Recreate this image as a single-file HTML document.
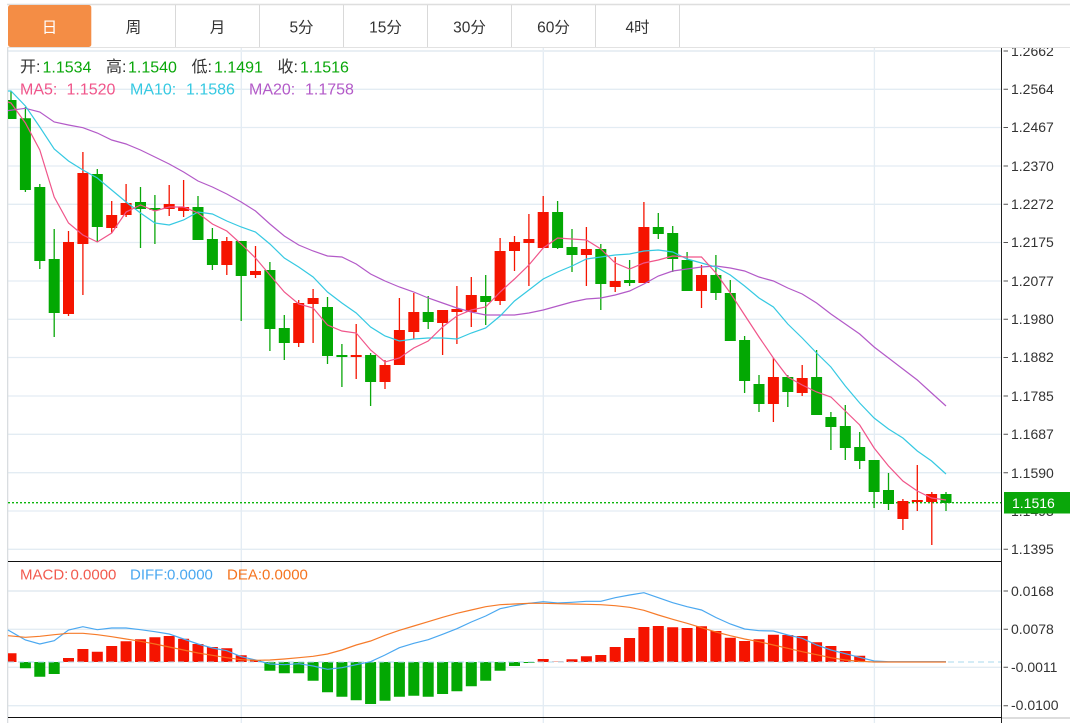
<!DOCTYPE html>
<html lang="zh"><head><meta charset="utf-8"><title>K</title>
<style>
html,body{margin:0;padding:0;background:#fff;width:1070px;height:723px;overflow:hidden}
svg{display:block;position:absolute;left:0;top:0}
text{font-family:"Liberation Sans","Noto Sans CJK SC",sans-serif}
.a{font-size:14px;fill:#333}
.t{font-size:15.5px;fill:#333;text-anchor:middle;font-family:"Liberation Sans","Noto Sans CJK SC",sans-serif}
.k{font-size:16px;fill:#333}
.g{font-size:16px;fill:#0aa70a}
</style></head><body>
<svg width="1070" height="723" viewBox="0 0 1070 723" xmlns="http://www.w3.org/2000/svg">
<rect width="1070" height="723" fill="#fff"/>
<!-- grid -->
<g stroke="#e3ecf3" stroke-width="1.3" fill="none">
<path d="M8 89.3H1001M8 127.5H1001M8 166H1001M8 204.3H1001M8 242.5H1001M8 281H1001M8 319.3H1001M8 357.5H1001M8 396H1001M8 434.3H1001M8 472.7H1001M8 511H1001M8 549.3H1001"/>
<path d="M8 629.3H1001M8 667.3H1001M8 705.7H1001"/>
<path d="M241.3 48V723M543.3 48V723M874.4 48V723"/>
<path d="M8 51H1001M8 591H1001" stroke="#e9eff4" stroke-width="2"/>
</g>
<rect x="7" y="48" width="1.3" height="675" fill="#d9dde0"/>
<!-- dotted last price -->
<path d="M8 502.7H1002" stroke="#0bb50b" stroke-width="1.4" stroke-dasharray="2 2" fill="none"/>
<!-- wicks green -->
<path fill="none" stroke="#0aa70a" stroke-width="1.3" d="M11 91V100M25.4 107V192M39.8 184V269M54.2 229V337M97.3 169V242M140.5 187V248M154.9 195V244M198 196V240M212.4 228V270M241.2 241V321M269.9 262V351M284.3 315V360M327.5 297V364M341.9 344V387M370.6 353V406M428.2 296V329M485.7 275V325M557.6 201V249M572 229V272M600.8 244V310M629.6 260V286M658.3 213V239M672.7 226V272M687.1 252V291M715.9 255V300M730.3 280V341M744.6 336V393M759 375V412M787.8 375V407M816.6 350V415M830.9 412V450M845.3 405V460M859.7 432V469M874.1 460V508M888.5 473V510M946 492V511"/>
<!-- wicks red -->
<path fill="none" stroke="#f51400" stroke-width="1.3" d="M68.5 231V316M82.9 152V295M111.7 201V233M126.1 184V217M169.2 185V216M183.6 180V217M226.8 237V275M255.5 246V278M298.7 300V347M313.1 289V343M356.2 324V379M385 360V389M399.4 298V365M413.8 293V339M442.6 310V355M456.9 286V344M471.3 277V327M500.1 238V305M514.5 236V271M528.9 214V286M543.2 196V248M586.4 227V286M615.2 257V292M643.9 202V283M701.5 265V308M773.4 358V422M802.2 365V396M902.9 499V530M917.3 465V511M931.8 492V545"/>
<!-- bodies green -->
<path fill="#03a803" d="M8 100h8.5V119H8zM19.9 118.3h11V190h-11zM34.3 187h11V261h-11zM48.7 259h11V313h-11zM91.8 174h11V227h-11zM135 202h11V209h-11zM149.4 208h11V210h-11zM192.5 207h11V240h-11zM206.9 239h11V265h-11zM235.7 241h11V276h-11zM264.4 270h11V329h-11zM278.8 328h11V343h-11zM322 307h11V356h-11zM336.4 355h11V357h-11zM365.1 355h11V382h-11zM422.7 312h11V322h-11zM480.2 296h11V302h-11zM552.1 212h11V248h-11zM566.5 247h11V255h-11zM595.3 249h11V284h-11zM624.1 280h11V283h-11zM652.8 227h11V234h-11zM667.2 233h11V259h-11zM681.6 260h11V291h-11zM710.4 275h11V293h-11zM724.8 293h11V341h-11zM739.1 340h11V381h-11zM753.5 384h11V404h-11zM782.3 377h11V392h-11zM811.1 377h11V415h-11zM825.4 417h11V427h-11zM839.8 426h11V448h-11zM854.2 447h11V461h-11zM868.6 460h11V492h-11zM883 490h11V504h-11zM940.5 494h11V503h-11z"/>
<!-- bodies red -->
<path fill="#f51400" d="M63 242h11V314h-11zM77.4 173h11V244h-11zM106.2 215h11V228h-11zM120.6 203h11V215h-11zM163.7 204h11V209h-11zM178.1 207h11V211h-11zM221.3 241h11V265h-11zM250 271h11V275h-11zM293.2 303h11V343h-11zM307.6 298h11V304h-11zM350.7 355h11V357h-11zM379.5 365h11V382h-11zM393.9 330h11V365h-11zM408.3 312h11V332h-11zM437.1 310h11V323h-11zM451.4 309h11V312h-11zM465.8 295h11V312h-11zM494.6 251h11V301h-11zM509 242h11V251h-11zM523.4 239h11V243h-11zM537.7 212h11V248h-11zM580.9 249h11V255h-11zM609.7 281h11V287h-11zM638.4 227h11V283h-11zM696 275h11V291h-11zM767.9 377h11V404h-11zM796.7 378h11V393h-11zM897.4 501h11V519h-11zM911.8 500h11V502h-11zM926.1 494h11V502h-11z"/>
<!-- MA20 -->
<polyline fill="none" stroke="#b35ac8" stroke-width="1.2" points="8,110.6 25.4,108.3 39.8,112 54.2,122 68.5,125 82.9,127.7 97.3,133 111.7,140 126.1,144 140.5,150 154.9,157 169.2,164 183.6,172 198,181 212.4,187 226.8,194 241.2,202 255.5,211 269.9,224 284.3,236 298.7,245 313.1,251 327.5,256 341.9,257 356.2,264 370.6,274 385,281 399.4,287 413.8,292 428.2,298 442.6,303 456.9,308 471.3,312 485.7,315 500.1,315 514.5,315 528.9,313 543.2,310 557.6,306 572,302 586.4,299 600.8,298 615.2,295 629.6,291 643.9,284 658.3,276 672.7,271 687.1,269 701.5,267 715.9,266 730.3,268 744.6,271 759,277 773.4,281 787.8,288 802.2,294 816.6,303 830.9,314 845.3,324 859.7,334 874.1,347 888.5,358 902.9,369 917.3,380 931.6,393 946,406"/>
<!-- MA10 -->
<polyline fill="none" stroke="#36c9e2" stroke-width="1.2" points="8,91 11,91 25.4,106 39.8,127 54.2,149 68.5,161 82.9,170 97.3,178 111.7,190 126.1,202 140.5,213 154.9,223 169.2,225 183.6,220 198,212 212.4,214 226.8,221 241.2,227 255.5,232 269.9,244 284.3,258 298.7,267 313.1,277 327.5,292 341.9,303 356.2,313 370.6,327 385,336 399.4,341 413.8,339 428.2,338 442.6,338 456.9,339 471.3,333 485.7,328 500.1,316 514.5,301 528.9,290 543.2,279 557.6,272 572,266 586.4,259 600.8,257 615.2,255 629.6,254 643.9,251 658.3,250 672.7,252 687.1,259 701.5,263 715.9,267 730.3,275 744.6,286 759,298 773.4,307 787.8,324 802.2,338 816.6,353 830.9,367 845.3,386 859.7,403 874.1,418 888.5,429 902.9,438 917.3,451 931.6,461 946,474"/>
<!-- MA5 -->
<polyline fill="none" stroke="#f0558a" stroke-width="1.2" points="8,102 11,103 25.4,123 39.8,150 54.2,197 68.5,223 82.9,235 97.3,242 111.7,233 126.1,212 140.5,205 154.9,211 169.2,207 183.6,207 198,213 212.4,224 226.8,231 241.2,244 255.5,258 269.9,275 284.3,292 298.7,304 313.1,308 327.5,325 341.9,331 356.2,333 370.6,350 385,362 399.4,358 413.8,348 428.2,341 442.6,327 456.9,316 471.3,310 485.7,307 500.1,292 514.5,279 528.9,265 543.2,248 557.6,238 572,239 586.4,240 600.8,249 615.2,263 629.6,269 643.9,263 658.3,260 672.7,256 687.1,257 701.5,257 715.9,273 730.3,293 744.6,315 759,337 773.4,358 787.8,377 802.2,385 816.6,392 830.9,397 845.3,411 859.7,425 874.1,448 888.5,466 902.9,481 917.3,491 931.6,498 946,500"/>
<!-- MACD bars -->
<path fill="#f51400" d="M8 653.3h8.5V662H8zM63 658h11V662h-11zM77.4 649h11V662h-11zM91.8 651.7h11V662h-11zM106.2 646h11V662h-11zM120.6 641.3h11V662h-11zM135 639.3h11V662h-11zM149.4 637.3h11V662h-11zM163.7 636h11V662h-11zM178.1 638.7h11V662h-11zM192.5 644h11V662h-11zM206.9 647h11V662h-11zM221.3 648.3h11V662h-11zM235.7 655.3h11V662h-11zM250 660h11V662h-11zM537.7 659h11V662h-11zM566.5 659.3h11V662h-11zM580.9 656.3h11V662h-11zM595.3 655h11V662h-11zM609.7 647h11V662h-11zM624.1 638h11V662h-11zM638.4 627h11V662h-11zM652.8 626h11V662h-11zM667.2 627.3h11V662h-11zM681.6 628h11V662h-11zM696 626.3h11V662h-11zM710.4 631h11V662h-11zM724.8 637.7h11V662h-11zM739.1 641h11V662h-11zM753.5 639.3h11V662h-11zM767.9 634.7h11V662h-11zM782.3 635h11V662h-11zM796.7 636h11V662h-11zM811.1 642.3h11V662h-11zM825.4 646h11V662h-11zM839.8 651h11V662h-11zM854.2 655.7h11V662h-11z"/>
<path fill="#f7b8ae" d="M552.1 661h11V662h-11z"/>
<path fill="#03a803" d="M19.9 662h11V668.3h-11zM34.3 662h11V676.7h-11zM48.7 662h11V674h-11zM264.4 662h11V670.7h-11zM278.8 662h11V673.3h-11zM293.2 662h11V673.3h-11zM307.6 662h11V680.7h-11zM322 662h11V692.3h-11zM336.4 662h11V696.7h-11zM350.7 662h11V700.3h-11zM365.1 662h11V704h-11zM379.5 662h11V700.7h-11zM393.9 662h11V696.7h-11zM408.3 662h11V695.7h-11zM422.7 662h11V696.7h-11zM437.1 662h11V694h-11zM451.4 662h11V691.3h-11zM465.8 662h11V686.3h-11zM480.2 662h11V680.7h-11zM494.6 662h11V670.7h-11zM509 662h11V666h-11zM523.4 662h11V663h-11z"/>
<path d="M8 662H1001" stroke="#a9d9ee" stroke-width="1" stroke-dasharray="6 4" fill="none"/>
<!-- DIFF -->
<polyline fill="none" stroke="#4ba8f0" stroke-width="1.2" points="8,630 25.4,640 39.8,644 54.2,640.7 68.5,630 82.9,626.7 97.3,629.7 111.7,628 126.1,628 140.5,629.7 154.9,631.7 169.2,634 183.6,639 198,644 212.4,648 226.8,650.7 241.2,656.7 255.5,660 269.9,664 284.3,664.7 298.7,663.7 313.1,666 327.5,669.3 341.9,667.7 356.2,664.7 370.6,661.7 385,655 399.4,647.7 413.8,643.3 428.2,639.7 442.6,634.3 456.9,628.7 471.3,622 485.7,616 500.1,608.7 514.5,605.7 528.9,603.3 543.2,601.7 557.6,603 572,602.3 586.4,601.3 600.8,601.3 615.2,597.7 629.6,595 643.9,592.7 658.3,597.7 672.7,602.7 687.1,606.7 701.5,610 715.9,617.5 730.3,624 744.6,629 759,630.7 773.4,631 787.8,635 802.2,638.3 816.6,645 830.9,650 845.3,653.7 859.7,657.3 874.1,661 888.5,661.7 946,661.7"/>
<!-- DEA -->
<polyline fill="none" stroke="#f5741f" stroke-width="1.2" stroke-opacity=".95" points="8,635.7 25.4,637.3 39.8,636.3 54.2,634.7 68.5,633.3 82.9,633.3 97.3,634.7 111.7,636.7 126.1,639 140.5,641.3 154.9,644 169.2,647 183.6,650 198,653 212.4,655.3 226.8,657.7 241.2,659.7 255.5,660.3 269.9,660 284.3,659 298.7,657.7 313.1,656.3 327.5,654 341.9,650 356.2,645 370.6,641 385,635.3 399.4,630.3 413.8,626 428.2,621.7 442.6,617.3 456.9,613.3 471.3,610 485.7,606.7 500.1,604.7 514.5,604 528.9,603.3 543.2,603.3 557.6,603.7 572,604 586.4,604.3 600.8,604.7 615.2,605.7 629.6,607.3 643.9,610.3 658.3,615 672.7,619.3 687.1,623.3 701.5,627.7 715.9,632 730.3,635.7 744.6,639 759,641.7 773.4,645 787.8,648.3 802.2,651.7 816.6,654.7 830.9,657.7 845.3,660 859.7,661.3 874.1,662 946,662"/>
<!-- panel lines -->
<path d="M8 561.5H1001M8 717.5H1001" stroke="#111" stroke-width="1" fill="none"/>
<path d="M1001 718H1070" stroke="#bbb" stroke-width="1" fill="none"/>
<path d="M1001.5 46V723" stroke="#222" stroke-width="1" fill="none"/>
<!-- axis labels -->
<path d="M1003.5 51H1008M1003.5 89.3H1008M1003.5 127.5H1008M1003.5 166H1008M1003.5 204.3H1008M1003.5 242.5H1008M1003.5 281H1008M1003.5 319.3H1008M1003.5 357.5H1008M1003.5 396H1008M1003.5 434.3H1008M1003.5 472.7H1008M1003.5 549.3H1008M1003.5 591H1008M1003.5 629.3H1008M1003.5 667.3H1008M1003.5 705.7H1008" stroke="#555" stroke-width="1" fill="none"/>
<text class="a" x="1011" y="56">1.2662</text>
<text class="a" x="1011" y="94">1.2564</text>
<text class="a" x="1011" y="132">1.2467</text>
<text class="a" x="1011" y="171">1.2370</text>
<text class="a" x="1011" y="209">1.2272</text>
<text class="a" x="1011" y="247">1.2175</text>
<text class="a" x="1011" y="286">1.2077</text>
<text class="a" x="1011" y="324">1.1980</text>
<text class="a" x="1011" y="362">1.1882</text>
<text class="a" x="1011" y="401">1.1785</text>
<text class="a" x="1011" y="439">1.1687</text>
<text class="a" x="1011" y="478">1.1590</text>
<text class="a" x="1011" y="516">1.1493</text>
<text class="a" x="1011" y="554">1.1395</text>
<text class="a" x="1011" y="596">0.0168</text>
<text class="a" x="1011" y="634">0.0078</text>
<text class="a" x="1011" y="672">-0.0011</text>
<text class="a" x="1011" y="710">-0.0100</text>
<rect x="1004" y="492" width="66" height="21.5" fill="#0aa70a"/>
<text x="1012" y="508" style="font-size:14px;fill:#fff">1.1516</text>
<!-- legend -->
<text class="k" x="20" y="72">开:</text><text class="g" x="42.5" y="72.5">1.1534</text>
<text class="k" x="106" y="72">高:</text><text class="g" x="128" y="72.5">1.1540</text>
<text class="k" x="191.5" y="72">低:</text><text class="g" x="214" y="72.5">1.1491</text>
<text class="k" x="277.5" y="72">收:</text><text class="g" x="300" y="72.5">1.1516</text>
<g style="font-size:16px">
<text x="20" y="94.5" fill="#f0558a">MA5:</text><text x="66.5" y="94.5" fill="#f0558a">1.1520</text>
<text x="130" y="94.5" fill="#36c9e2">MA10:</text><text x="186" y="94.5" fill="#36c9e2">1.1586</text>
<text x="249" y="94.5" fill="#b35ac8">MA20:</text><text x="305" y="94.5" fill="#b35ac8">1.1758</text>
</g>
<g style="font-size:15px">
<text x="20" y="579.5" fill="#f25a4e">MACD:</text><text x="70.5" y="579.5" fill="#f25a4e">0.0000</text>
<text x="130" y="579.5" fill="#4ba8f0">DIFF:</text><text x="167" y="579.5" fill="#4ba8f0">0.0000</text>
<text x="227" y="579.5" fill="#f5741f">DEA:</text><text x="262" y="579.5" fill="#f5741f">0.0000</text>
</g>
<!-- tabs -->
<rect x="0" y="0" width="1070" height="47" fill="#fff"/>
<path d="M7 4.5H1070" stroke="#dedede" stroke-width="1.5" fill="none"/>
<path d="M7 47.5H1070" stroke="#e2e2e2" stroke-width="1" fill="none"/>
<path d="M175.5 5V47M259.5 5V47M343.5 5V47M427.5 5V47M511.5 5V47M595.5 5V47M679.5 5V47" stroke="#d9d9d9" stroke-width="1" fill="none"/>
<rect x="8" y="5" width="83.3" height="42" rx="2.5" fill="#f48d45"/>
<text class="t" x="49.5" y="32.5" style="fill:#fff">日</text>
<text class="t" x="133.5" y="32.5">周</text>
<text class="t" x="217.5" y="32.5">月</text>
<text class="t" x="301.5" y="32.5">5分</text>
<text class="t" x="385.5" y="32.5">15分</text>
<text class="t" x="469.5" y="32.5">30分</text>
<text class="t" x="553.5" y="32.5">60分</text>
<text class="t" x="637.5" y="32.5">4时</text>
</svg>
</body></html>
